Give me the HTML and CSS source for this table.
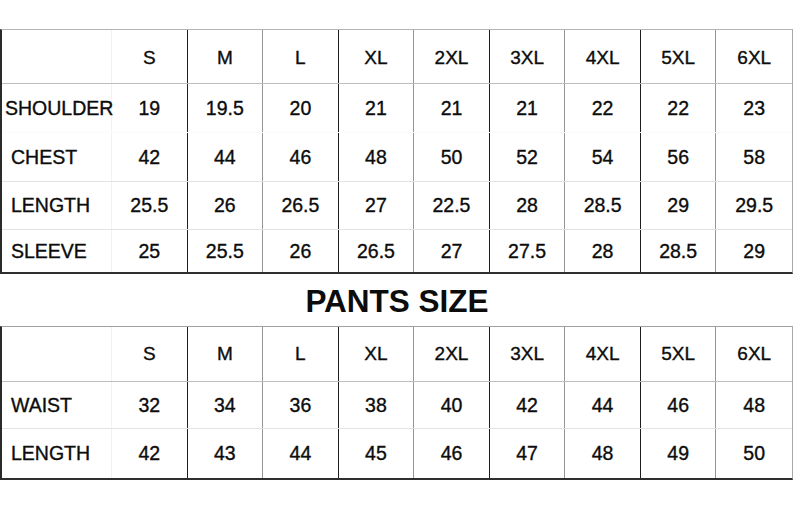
FILE: index.html
```html
<!DOCTYPE html>
<html>
<head>
<meta charset="utf-8">
<link rel="stylesheet" href="styles.css">
</head>
<body>
<div class="page">
  <div class="chart chart-top">
    <div class="row head h55 lowered">
      <div class="cell label"></div>
      <div class="cell">S</div><div class="cell">M</div><div class="cell">L</div><div class="cell">XL</div><div class="cell">2XL</div><div class="cell">3XL</div><div class="cell">4XL</div><div class="cell">5XL</div><div class="cell">6XL</div>
    </div>
    <div class="row h49 nosep">
      <div class="cell label wide">SHOULDER</div>
      <div class="cell">19</div><div class="cell">19.5</div><div class="cell">20</div><div class="cell">21</div><div class="cell">21</div><div class="cell">21</div><div class="cell">22</div><div class="cell">22</div><div class="cell">23</div>
    </div>
    <div class="row h49">
      <div class="cell label">CHEST</div>
      <div class="cell">42</div><div class="cell">44</div><div class="cell">46</div><div class="cell">48</div><div class="cell">50</div><div class="cell">52</div><div class="cell">54</div><div class="cell">56</div><div class="cell">58</div>
    </div>
    <div class="row h48">
      <div class="cell label">LENGTH</div>
      <div class="cell">25.5</div><div class="cell">26</div><div class="cell">26.5</div><div class="cell">27</div><div class="cell">22.5</div><div class="cell">28</div><div class="cell">28.5</div><div class="cell">29</div><div class="cell">29.5</div>
    </div>
    <div class="row h42 last">
      <div class="cell label">SLEEVE</div>
      <div class="cell">25</div><div class="cell">25.5</div><div class="cell">26</div><div class="cell">26.5</div><div class="cell">27</div><div class="cell">27.5</div><div class="cell">28</div><div class="cell">28.5</div><div class="cell">29</div>
    </div>
  </div>

  <div class="title">PANTS SIZE</div>

  <div class="chart chart-bottom">
    <div class="row head h56">
      <div class="cell label"></div>
      <div class="cell">S</div><div class="cell">M</div><div class="cell">L</div><div class="cell">XL</div><div class="cell">2XL</div><div class="cell">3XL</div><div class="cell">4XL</div><div class="cell">5XL</div><div class="cell">6XL</div>
    </div>
    <div class="row h47">
      <div class="cell label">WAIST</div>
      <div class="cell">32</div><div class="cell">34</div><div class="cell">36</div><div class="cell">38</div><div class="cell">40</div><div class="cell">42</div><div class="cell">44</div><div class="cell">46</div><div class="cell">48</div>
    </div>
    <div class="row h49 last">
      <div class="cell label">LENGTH</div>
      <div class="cell">42</div><div class="cell">43</div><div class="cell">44</div><div class="cell">45</div><div class="cell">46</div><div class="cell">47</div><div class="cell">48</div><div class="cell">49</div><div class="cell">50</div>
    </div>
  </div>
</div>
</body>
</html>
```
FILE: styles.css
```css
* { box-sizing: border-box; }
html, body {
  margin: 0;
  padding: 0;
  background: #ffffff;
}
body {
  font-family: "Liberation Sans", Arial, sans-serif;
  color: #0c0c0c;
}
.page {
  width: 794px;
  height: 513px;
  padding-top: 29px;
  overflow: hidden;
}
.chart {
  width: 793px;
  border-top: 1px solid #b4b4b4;
  border-left: 2px solid #2a2a2a;
  border-right: 1px solid #a8a8a8;
  border-bottom: 2px solid #2e2e2e;
  display: flex;
  flex-direction: column;
}
.row {
  display: grid;
  grid-template-columns: 110px repeat(9, 1fr);
  border-bottom: 1px solid #e2e2e2;
}
.row.head { border-bottom: 1px solid #bdbdbd; }
.row.nosep { border-bottom-color: #fbfbfb; }
.row.last { border-bottom: none; }
.h42 { height: 42px; }
.h47 { height: 47px; }
.h48 { height: 48px; }
.h49 { height: 49px; }
.h55 { height: 54px; }
.h56 { height: 55px; }

.cell {
  display: flex;
  align-items: center;
  justify-content: center;
  font-size: 19.5px;
  -webkit-text-stroke: 0.35px #0c0c0c;
  border-right: 1px solid #959595;
  white-space: nowrap;
}
.head .cell { font-size: 19px; }
.lowered .cell { padding-top: 3px; }
.cell:nth-child(2n) { border-right: 1px solid #1e1e1e; }
.cell:last-child { border-right: none; }
.cell.label {
  justify-content: flex-start;
  padding-left: 9px;
  border-right: 1px solid #f1f1f1;
}
.cell.label.wide { padding-left: 3px; }

.title {
  height: 52px;
  display: flex;
  align-items: center;
  justify-content: center;
  font-weight: bold;
  font-size: 31.5px;
  color: #0c0c0c;
  padding-top: 2px;
}
.chart-bottom { border-top-color: #a0a0a0; }
```
